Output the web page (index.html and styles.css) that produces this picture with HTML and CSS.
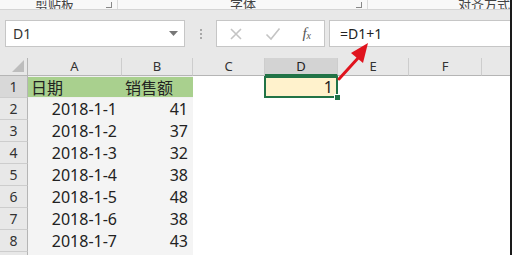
FILE: index.html
```html
<!DOCTYPE html>
<html lang="zh-CN">
<head>
    <meta charset="UTF-8">
    <title>Excel - D1+1</title>
    <link rel="stylesheet" href="styles.css">
</head>
<body>
    <div class="window">
        <!-- bottom edge of the ribbon, group labels cut off -->
        <div class="ribbon">
            <div class="group group-clip">
                <span class="group-label">剪贴板</span>
                <span class="launcher"></span>
            </div>
            <div class="group group-font">
                <span class="group-label">字体</span>
                <span class="launcher"></span>
            </div>
            <div class="group group-align">
                <span class="group-label">对齐方式</span>
            </div>
        </div>

        <!-- name box and formula bar -->
        <div class="formula-bar">
            <div class="name-box">
                <span>D1</span>
                <svg class="dropdown" width="9" height="5" viewBox="0 0 9 5"><path d="M0 0h9L4.5 5z" fill="#777"/></svg>
            </div>
            <div class="grip">
                <i></i><i></i><i></i>
            </div>
            <div class="fx-buttons">
                <svg width="14" height="14" viewBox="0 0 14 14"><path d="M2 2l10 10M12 2L2 12" stroke="#c4c4c4" stroke-width="1.6"/></svg>
                <svg width="16" height="14" viewBox="0 0 16 14"><path d="M1.5 7.5l4.5 4.5L14.5 1.5" fill="none" stroke="#c4c4c4" stroke-width="1.6"/></svg>
                <span class="fx">f<sub>x</sub></span>
            </div>
            <div class="formula-input">=D1+1</div>
        </div>

        <!-- sheet grid -->
        <div class="sheet">
            <div class="corner"><svg width="12" height="12" viewBox="0 0 12 12"><path d="M12 0v12H0z" fill="#bdbdbd"/></svg></div>
            <div class="col-head">A</div>
            <div class="col-head">B</div>
            <div class="col-head">C</div>
            <div class="col-head active">D</div>
            <div class="col-head">E</div>
            <div class="col-head">F</div>
            <div class="col-head last"></div>

            <div class="row-head active">1</div>
            <div class="cell title">日期</div>
            <div class="cell title">销售额</div>
            <div class="cell"></div>
            <div class="cell selected">1<span class="handle"></span></div>
            <div class="cell"></div>
            <div class="cell"></div>
            <div class="cell"></div>

            <div class="row-head">2</div>
            <div class="cell data num">2018-1-1</div>
            <div class="cell data num">41</div>
            <div class="cell"></div><div class="cell"></div><div class="cell"></div><div class="cell"></div><div class="cell"></div>

            <div class="row-head">3</div>
            <div class="cell data num">2018-1-2</div>
            <div class="cell data num">37</div>
            <div class="cell"></div><div class="cell"></div><div class="cell"></div><div class="cell"></div><div class="cell"></div>

            <div class="row-head">4</div>
            <div class="cell data num">2018-1-3</div>
            <div class="cell data num">32</div>
            <div class="cell"></div><div class="cell"></div><div class="cell"></div><div class="cell"></div><div class="cell"></div>

            <div class="row-head">5</div>
            <div class="cell data num">2018-1-4</div>
            <div class="cell data num">38</div>
            <div class="cell"></div><div class="cell"></div><div class="cell"></div><div class="cell"></div><div class="cell"></div>

            <div class="row-head">6</div>
            <div class="cell data num">2018-1-5</div>
            <div class="cell data num">48</div>
            <div class="cell"></div><div class="cell"></div><div class="cell"></div><div class="cell"></div><div class="cell"></div>

            <div class="row-head">7</div>
            <div class="cell data num">2018-1-6</div>
            <div class="cell data num">38</div>
            <div class="cell"></div><div class="cell"></div><div class="cell"></div><div class="cell"></div><div class="cell"></div>

            <div class="row-head">8</div>
            <div class="cell data num">2018-1-7</div>
            <div class="cell data num">43</div>
            <div class="cell"></div><div class="cell"></div><div class="cell"></div><div class="cell"></div><div class="cell"></div>

            <div class="row-head">9</div>
            <div class="cell data"></div>
            <div class="cell data"></div>
            <div class="cell"></div><div class="cell"></div><div class="cell"></div><div class="cell"></div><div class="cell"></div>
        </div>

        <!-- red annotation arrow from D1 to the formula -->
        <svg class="arrow" width="40" height="40" viewBox="0 0 40 40">
            <path d="M2 38L22 16" stroke="#e0141e" stroke-width="3" stroke-linecap="round"/>
            <path d="M31 2L14 12L26 22z" fill="#e0141e"/>
        </svg>
    </div>
</body>
</html>
```

FILE: styles.css
```css
body {
    margin: 0;
    background: #fff;
    font-family: "Noto Sans", "Noto Sans CJK SC", sans-serif;
    color: #222;
}

.window {
    position: relative;
    width: 510px;
    height: 255px;
    overflow: hidden;
    border-right: 2px solid #1a1a1a;
    background: #fff;
}

/* ribbon remnant */
.ribbon {
    height: 9px;
    overflow: hidden;
    background: #f8f8f8;
    border-bottom: 1px solid #d4d4d4;
    display: flex;
    font-family: "Noto Sans CJK SC", sans-serif;
    font-size: 13px;
    color: #444;
    white-space: nowrap;
}

.group {
    position: relative;
    display: flex;
    align-items: flex-end;
    height: 9px;
    border-right: 1px solid #dadada;
}

.group-label {
    line-height: 13px;
    margin-bottom: -1px;
}

.group-clip {
    width: 122px;
    padding-left: 35px;
    box-sizing: border-box;
}

.group-font {
    width: 257px;
    padding-left: 112px;
    box-sizing: border-box;
}

.group-align {
    flex: 1;
    padding-left: 90px;
    border-right: none;
}

.launcher {
    position: absolute;
    right: 5px;
    bottom: 1px;
    width: 5px;
    height: 5px;
    border-right: 1px solid #888;
    border-bottom: 1px solid #888;
}

/* formula bar */
.formula-bar {
    height: 48px;
    background: #e8e8e8;
    display: flex;
    align-items: flex-start;
    padding-top: 10px;
    box-sizing: border-box;
}

.name-box {
    width: 180px;
    height: 27px;
    margin-left: 5px;
    background: #fff;
    border: 1px solid #c6c6c6;
    box-sizing: border-box;
    display: flex;
    align-items: center;
    justify-content: space-between;
    padding: 0 6px 0 7px;
    font-size: 14px;
    color: #333;
}

.grip {
    width: 31px;
    height: 27px;
    display: flex;
    flex-direction: column;
    align-items: center;
    justify-content: center;
    gap: 2px;
}

.grip i {
    width: 2px;
    height: 2px;
    background: #a8a8a8;
}

.fx-buttons {
    width: 109px;
    height: 27px;
    background: #fff;
    border: 1px solid #c6c6c6;
    box-sizing: border-box;
    display: flex;
    align-items: center;
    justify-content: space-between;
    padding: 0 13px 0 12px;
}

.fx {
    font-family: "Liberation Serif", serif;
    font-style: italic;
    font-size: 15px;
    color: #555;
    line-height: 1;
}

.fx sub {
    font-size: 10px;
    vertical-align: -1px;
}

.formula-input {
    flex: 1;
    height: 27px;
    margin-left: 4px;
    background: #fff;
    border: 1px solid #c6c6c6;
    border-right: none;
    box-sizing: border-box;
    padding-left: 10px;
    font-size: 14px;
    line-height: 25px;
    color: #222;
}

/* sheet */
.sheet {
    display: grid;
    grid-template-columns: 28px 94px 71px 72px 73px 71px 73px 1fr;
    grid-template-rows: 18px repeat(9, 22px);
    font-size: 16px;
}

.corner {
    background: #e8e8e8;
    border-right: 1px solid #b5b5b5;
    border-bottom: 1px solid #b5b5b5;
    display: flex;
    align-items: flex-end;
    justify-content: flex-end;
    padding: 0 3px 3px 0;
}

.col-head {
    background: #e8e8e8;
    border-bottom: 1px solid #b5b5b5;
    border-right: 1px solid #cdcdcd;
    text-align: center;
    font-size: 13px;
    line-height: 17px;
    color: #333;
}

.col-head.active {
    background: #d3d3d3;
    border-bottom: 2px solid #217346;
    color: #222;
}

.col-head.last {
    border-right: none;
}

.row-head {
    background: #e8e8e8;
    border-right: 1px solid #b5b5b5;
    border-bottom: 1px solid #cdcdcd;
    text-align: center;
    font-size: 14px;
    line-height: 22px;
    color: #333;
}

.row-head.active {
    background: #d8d8d8;
}

.cell {
    line-height: 22px;
    white-space: nowrap;
    position: relative;
}

.cell.title {
    background: #a9d08e;
    font-family: "Noto Sans CJK SC", sans-serif;
    padding-left: 3px;
    border-top: 1px solid #f0f0f0;
    border-bottom: 1px solid #f0f0f0;
    line-height: 20px;
}

.cell.data {
    background: #f4f4f4;
}

.cell.num {
    text-align: right;
    padding-right: 5px;
}

.cell.selected {
    background: #fff2cc;
    border: 2px solid #217346;
    text-align: right;
    padding-right: 3px;
    line-height: 18px;
    margin-left: -1px;
}

.handle {
    position: absolute;
    right: -5px;
    bottom: -5px;
    width: 5px;
    height: 5px;
    background: #217346;
    border: 1px solid #fff;
}

.arrow {
    position: absolute;
    left: 337px;
    top: 41px;
}
```
